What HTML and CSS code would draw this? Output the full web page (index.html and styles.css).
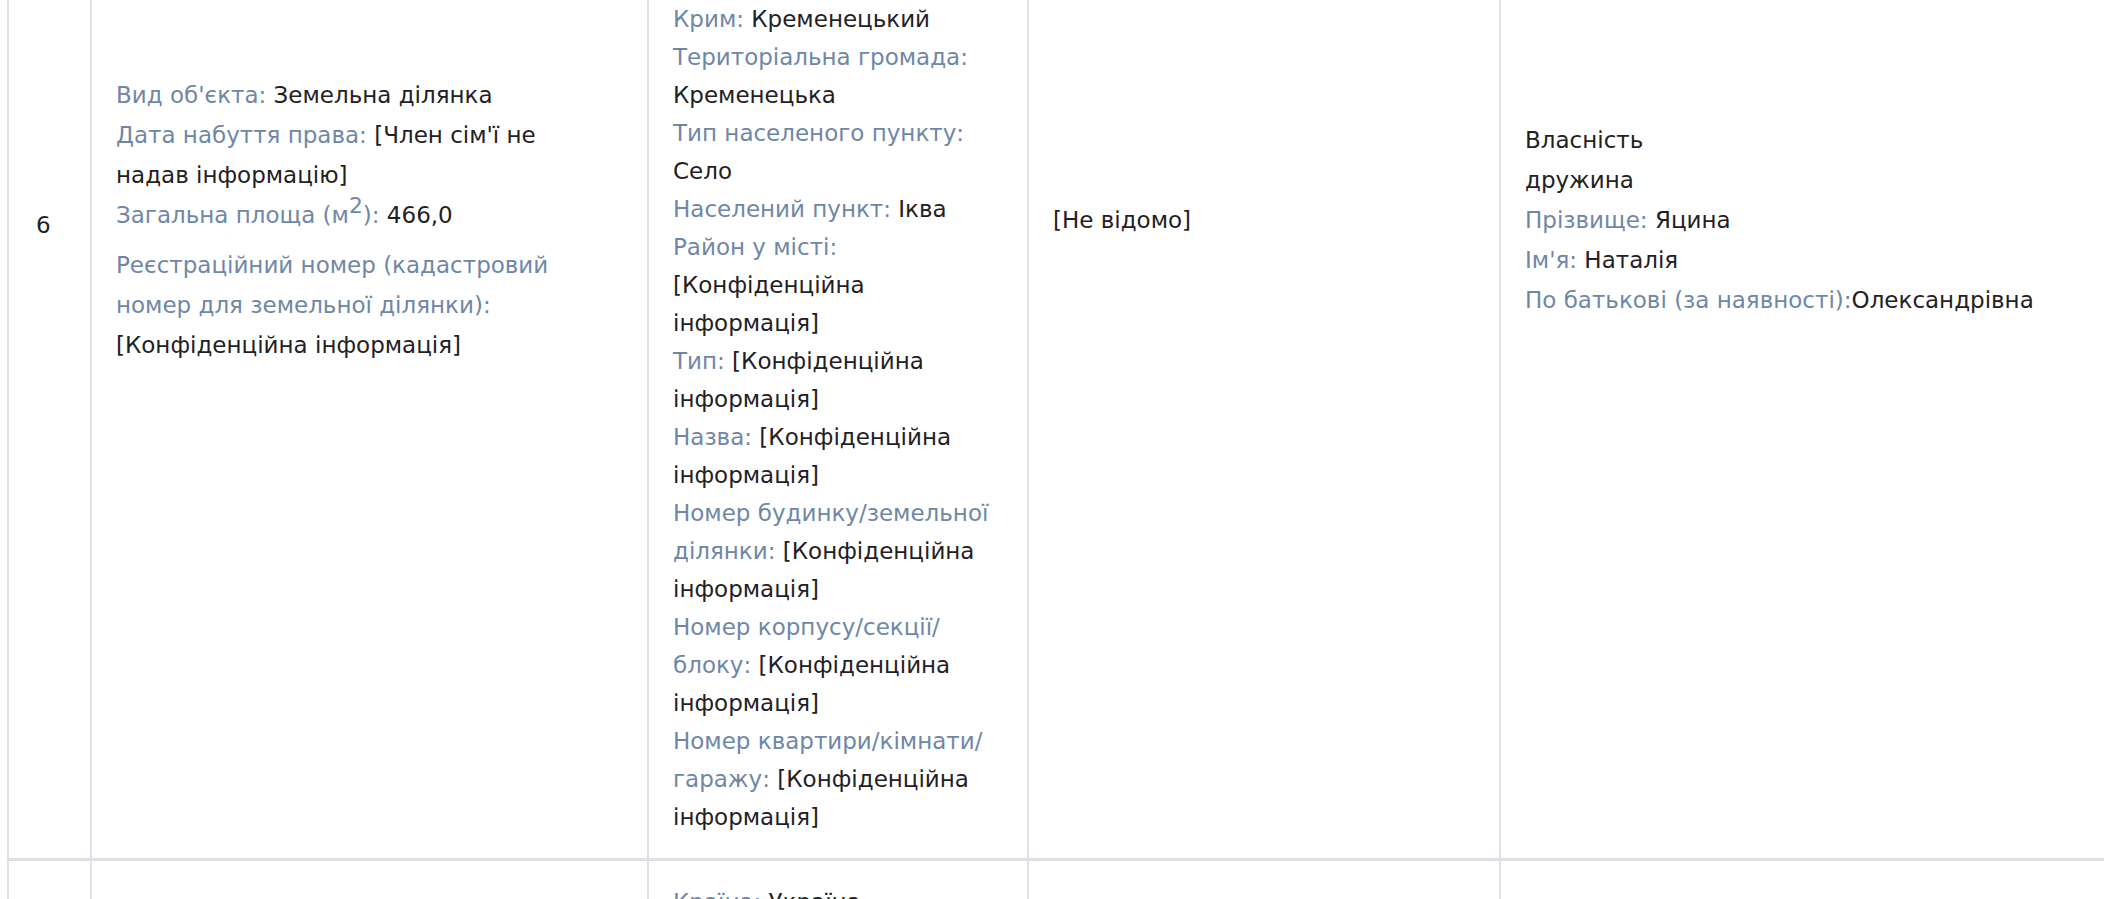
FILE: index.html
```html
<!DOCTYPE html>
<html lang="uk">

<head>
    <meta charset="UTF-8">
    <meta name="viewport" content="width=device-width, initial-scale=1.0">
    <title>Об'єкти нерухомості</title>
    <link rel="stylesheet" href="styles.css">
</head>

<body>
    <div class="wrap">
        <table class="assets">
            <colgroup>
                <col class="c-num">
                <col class="c-obj">
                <col class="c-addr">
                <col class="c-cost">
                <col class="c-owner">
            </colgroup>
            <tbody>
                <tr>
                    <td class="num">6</td>
                    <td>
                        <div class="obj">
                            <div><span class="lbl">Вид об'єкта:</span> Земельна ділянка</div>
                            <div><span class="lbl">Дата набуття права:</span> [Член сім'ї не надав інформацію]</div>
                            <div><span class="lbl">Загальна площа (м<sup>2</sup>):</span> 466,0</div>
                            <div class="gap"><span class="lbl">Реєстраційний номер (кадастровий номер для земельної ділянки):</span> [Конфіденційна інформація]</div>
                        </div>
                    </td>
                    <td class="addr first">
                        <div><span class="lbl">Країна:</span> Україна</div>
                        <div><span class="lbl">Адреса:</span> [Конфіденційна інформація]</div>
                        <div><span class="lbl">Місто:</span> [Не відомо]</div>
                        <div><span class="lbl">Поштовий індекс:</span> [Конфіденційна інформація]</div>
                        <div><span class="lbl">Регіон:</span> Тернопільська область</div>
                        <div><span class="lbl">Район області або АР Крим:</span> Кременецький</div>
                        <div><span class="lbl">Територіальна громада:</span> Кременецька</div>
                        <div><span class="lbl">Тип населеного пункту:</span> Село</div>
                        <div><span class="lbl">Населений пункт:</span> Іква</div>
                        <div><span class="lbl">Район у місті:</span> [Конфіденційна інформація]</div>
                        <div><span class="lbl">Тип:</span> [Конфіденційна інформація]</div>
                        <div><span class="lbl">Назва:</span> [Конфіденційна інформація]</div>
                        <div><span class="lbl">Номер будинку/земельної ділянки:</span> [Конфіденційна інформація]</div>
                        <div><span class="lbl">Номер корпусу/секції/<wbr>блоку:</span> [Конфіденційна інформація]</div>
                        <div><span class="lbl">Номер квартири/кімнати/<wbr>гаражу:</span> [Конфіденційна інформація]</div>
                    </td>
                    <td>[Не відомо]</td>
                    <td>
                        <div>Власність</div>
                        <div>дружина</div>
                        <div><span class="lbl">Прізвище:</span> Яцина</div>
                        <div><span class="lbl">Ім'я:</span> Наталія</div>
                        <div><span class="lbl">По батькові (за наявності):</span>Олександрівна</div>
                    </td>
                </tr>
                <tr>
                    <td class="num">7</td>
                    <td>
                        <div class="obj">
                            <div><span class="lbl">Вид об'єкта:</span> Земельна ділянка</div>
                            <div><span class="lbl">Дата набуття права:</span> [Член сім'ї не надав інформацію]</div>
                        </div>
                    </td>
                    <td class="addr">
                        <div><span class="lbl">Країна:</span> Україна</div>
                        <div><span class="lbl">Поштовий індекс:</span> [Конфіденційна інформація]</div>
                        <div><span class="lbl">Регіон:</span> Тернопільська область</div>
                    </td>
                    <td>[Не відомо]</td>
                    <td>
                        <div>Власність</div>
                        <div>дружина</div>
                    </td>
                </tr>
            </tbody>
        </table>
    </div>
</body>

</html>
```
FILE: styles.css
```css
body {
    margin: 0;
    height: 899px;
    overflow: hidden;
    background: #fff;
    color: #1f2125;
    font-family: "DejaVu Sans", Arial, sans-serif;
    font-size: 23px;
}

.wrap {
    padding-left: 7px;
}

.assets {
    border-collapse: separate;
    border-spacing: 0;
    table-layout: fixed;
    width: 2192px;
    margin-top: -418px;
}

.c-num { width: 83px; }
.c-obj { width: 557px; }
.c-addr { width: 380px; }
.c-cost { width: 472px; }
.c-owner { width: 700px; }

.assets td {
    border-left: 2px solid #dfe2e6;
    border-bottom: 3px solid #dce0e5;
    padding: 22px 24px;
    vertical-align: middle;
    line-height: 40px;
}

.assets td.num {
    padding-left: 27px;
    padding-top: 32px;
}

.assets td.addr {
    vertical-align: top;
    line-height: 38px;
    padding-top: 22px;
}

.assets td.first {
    padding-top: 38px;
}

.lbl {
    color: #6f87a6;
}

.obj {
    max-width: 460px;
}

.gap {
    margin-top: 10px;
}

sup {
    font-size: 0.95em;
    line-height: 0;
    vertical-align: 10px;
}
```
